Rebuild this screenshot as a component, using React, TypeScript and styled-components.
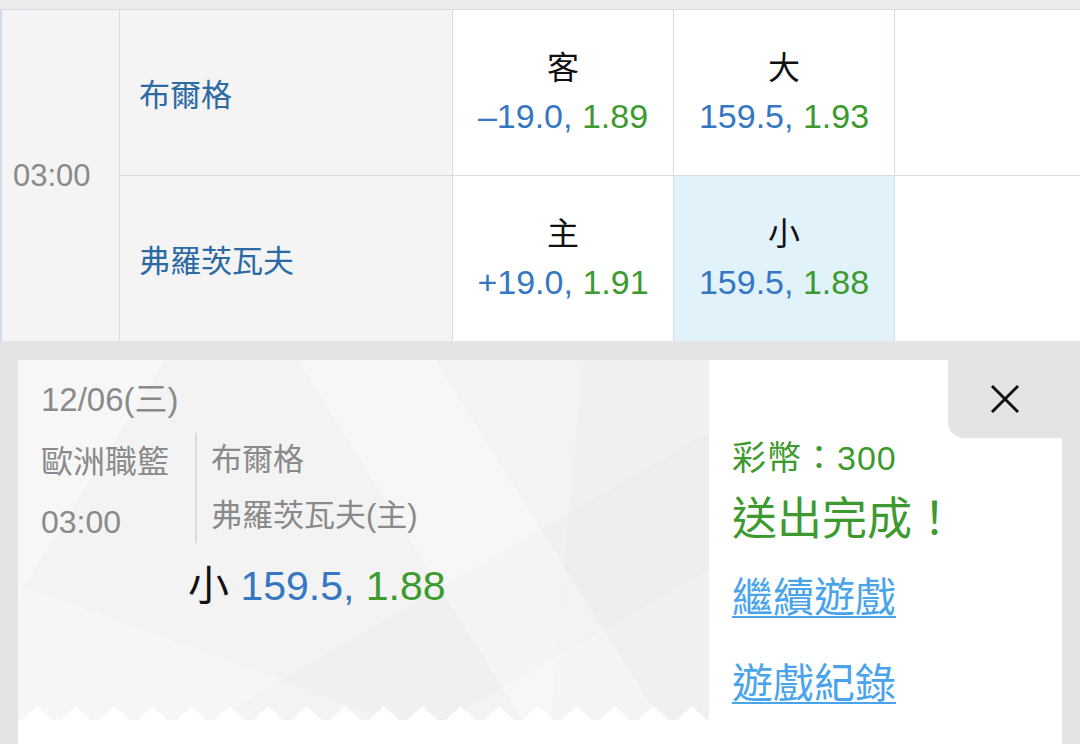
import styled, { createGlobalStyle } from "styled-components"

const GlobalStyle = createGlobalStyle`
    html, body {
        margin: 0;
        padding: 0;
        background: #e4e4e4;
    }
    body {
        width: 1080px;
        height: 744px;
        overflow: hidden;
        font-family: "Liberation Sans", "Noto Sans CJK TC", sans-serif;
    }
`

const BLUE = "#3577c2"
const GREEN = "#3c9a2e"
const BORDER = "#d2dde7"

type Bet = { label: string; line: string; odds: string; picked?: boolean }

const rows: { team: string; spread: Bet; total: Bet }[] = [
    { team: "布爾格", spread: { label: "客", line: "–19.0,", odds: "1.89" }, total: { label: "大", line: "159.5,", odds: "1.93" } },
    { team: "弗羅茨瓦夫", spread: { label: "主", line: "+19.0,", odds: "1.91" }, total: { label: "小", line: "159.5,", odds: "1.88", picked: true } },
]

function App() {
    return (
        <Page>
            <GlobalStyle />
            <TopStrip />
            <MatchTable>
                <TimeCell>03:00</TimeCell>
                {rows.map((row, index) => (
                    <Row key={index} $last={index === rows.length - 1}>
                        <TeamCell>{row.team}</TeamCell>
                        {[row.spread, row.total].map((bet, i) => (
                            <OddsCell key={i} $picked={bet.picked}>
                                <OddsLabel>{bet.label}</OddsLabel>
                                <OddsLine>
                                    <Blue>{bet.line}</Blue> <Green>{bet.odds}</Green>
                                </OddsLine>
                            </OddsCell>
                        ))}
                        <EmptyCell />
                    </Row>
                ))}
            </MatchTable>

            <ResultArea>
                <ResultPanel>
                    <Ticket>
                        <DateLine>12/06(三)</DateLine>
                        <InfoRow>
                            <LeagueCol>
                                <LeagueLine>歐洲職籃</LeagueLine>
                                <LeagueLine>03:00</LeagueLine>
                            </LeagueCol>
                            <Divider />
                            <TeamsCol>
                                <TeamLine>布爾格</TeamLine>
                                <TeamLine>弗羅茨瓦夫(主)</TeamLine>
                            </TeamsCol>
                        </InfoRow>
                        <PickLine>
                            小 <Blue>159.5,</Blue> <Green>1.88</Green>
                        </PickLine>
                    </Ticket>

                    <SidePanel>
                        <CloseButton aria-label="close">
                            <svg width="30" height="30" viewBox="0 0 30 30">
                                <path d="M2 2 L28 28 M28 2 L2 28" stroke="#111" strokeWidth="3" fill="none" />
                            </svg>
                        </CloseButton>
                        <Coins>彩幣：300</Coins>
                        <Done>送出完成！</Done>
                        <LinkText href="#" $gap={26}>繼續遊戲</LinkText>
                        <LinkText href="#" $gap={34}>遊戲紀錄</LinkText>
                    </SidePanel>
                </ResultPanel>
            </ResultArea>
        </Page>
    )
}

export default App

const Page = styled.div`
    width: 1080px;
    height: 744px;
    display: flex;
    flex-direction: column;
    background: #e4e4e4;
`

const TopStrip = styled.div`
    height: 9px;
    background: #ececec;
`

const MatchTable = styled.div`
    display: grid;
    grid-template-columns: 118px 1fr;
    border-top: 1px solid ${BORDER};
    border-left: 2px solid ${BORDER};
    background: #fff;
`

const TimeCell = styled.div`
    grid-row: 1 / span 2;
    display: flex;
    align-items: center;
    padding-left: 11px;
    background: #f4f4f4;
    border-right: 1px solid ${BORDER};
    color: #8a8a8a;
    font-size: 31px;
`

const Row = styled.div<{ $last?: boolean }>`
    grid-column: 2;
    display: grid;
    grid-template-columns: 333px 221px 221px 1fr;
    height: ${(p) => (p.$last ? 165 : 166)}px;
    box-sizing: border-box;
    border-bottom: ${(p) => (p.$last ? "none" : `1px solid ${BORDER}`)};
`

const TeamCell = styled.div`
    display: flex;
    align-items: center;
    padding-left: 19px;
    background: #f4f4f4;
    border-right: 1px solid ${BORDER};
    color: #2c6aa4;
    font-size: 31px;
`

const OddsCell = styled.div<{ $picked?: boolean }>`
    display: flex;
    flex-direction: column;
    align-items: center;
    justify-content: center;
    background: ${(p) => (p.$picked ? "#e1f2fb" : "#fff")};
    border-right: 1px solid ${BORDER};
`

const OddsLabel = styled.div`
    font-size: 32px;
    line-height: 46px;
    color: #111;
`

const OddsLine = styled.div`
    font-size: 34px;
    line-height: 50px;
    white-space: nowrap;
`

const EmptyCell = styled.div`
    background: #fff;
`

const Blue = styled.span`
    color: ${BLUE};
`

const Green = styled.span`
    color: ${GREEN};
`

const ResultArea = styled.div`
    flex: 1;
    padding: 19px 18px 0 18px;
    min-height: 0;
`

const ResultPanel = styled.div`
    height: 100%;
    display: grid;
    grid-template-columns: 691px 1fr;
    align-items: start;
    background: #fff;
`

const Ticket = styled.div`
    position: relative;
    height: 360px;
    box-sizing: border-box;
    padding: 20px 0 0 23px;
    background-color: #f3f3f3;
    background-image:
        linear-gradient(122deg, rgba(255, 255, 255, 0.35) 0 16%, transparent 16.2%),
        linear-gradient(58deg, transparent 55%, rgba(255, 255, 255, 0.3) 55.2% 70%, transparent 70.2%),
        linear-gradient(150deg, transparent 62%, rgba(0, 0, 0, 0.012) 62.2% 80%, transparent 80.2%),
        linear-gradient(20deg, rgba(255, 255, 255, 0.25) 0 22%, transparent 22.2%),
        linear-gradient(95deg, transparent 78%, rgba(0, 0, 0, 0.01) 78.2%);

    &::after {
        content: "";
        position: absolute;
        left: 0;
        right: 0;
        bottom: 0;
        height: 14px;
        background: conic-gradient(from 133deg at 50% 0, #fff 94deg, transparent 0) 0 0 / 38.5px 14px repeat-x;
    }
`

const DateLine = styled.div`
    font-size: 33px;
    line-height: 40px;
    color: #8a8a8a;
`

const InfoRow = styled.div`
    display: flex;
    margin-top: 12px;
    height: 120px;
`

const LeagueCol = styled.div`
    width: 154px;
    display: flex;
    flex-direction: column;
`

const LeagueLine = styled.div`
    font-size: 32px;
    line-height: 60px;
    color: #8a8a8a;
`

const Divider = styled.div`
    width: 2px;
    height: 110px;
    margin-top: 1px;
    background: #dcdcdc;
`

const TeamsCol = styled.div`
    display: flex;
    flex-direction: column;
    padding-left: 14px;
`

const TeamLine = styled.div`
    font-size: 31px;
    line-height: 56px;
    color: #8a8a8a;
    white-space: nowrap;
`

const PickLine = styled.div`
    margin: 9px 0 0 147px;
    font-size: 41px;
    line-height: 50px;
    color: #111;
    white-space: nowrap;
`

const SidePanel = styled.div`
    display: flex;
    flex-direction: column;
    padding-left: 23px;
`

const CloseButton = styled.button`
    align-self: flex-end;
    width: 114px;
    height: 78px;
    display: flex;
    align-items: center;
    justify-content: center;
    padding: 0;
    border: none;
    background: #e4e4e4;
    border-bottom-left-radius: 16px;
    cursor: pointer;
`

const Coins = styled.div`
    font-size: 34px;
    line-height: 40px;
    color: ${GREEN};
    letter-spacing: 1px;
`

const Done = styled.div`
    margin-top: 16px;
    font-size: 45px;
    line-height: 52px;
    color: ${GREEN};
`

const LinkText = styled.a<{ $gap: number }>`
    margin-top: ${(p) => p.$gap}px;
    font-size: 41px;
    line-height: 52px;
    color: #4aa4ec;
    text-decoration: underline;
    text-decoration-thickness: 2px;
    text-underline-offset: 4px;
    align-self: flex-start;
`
